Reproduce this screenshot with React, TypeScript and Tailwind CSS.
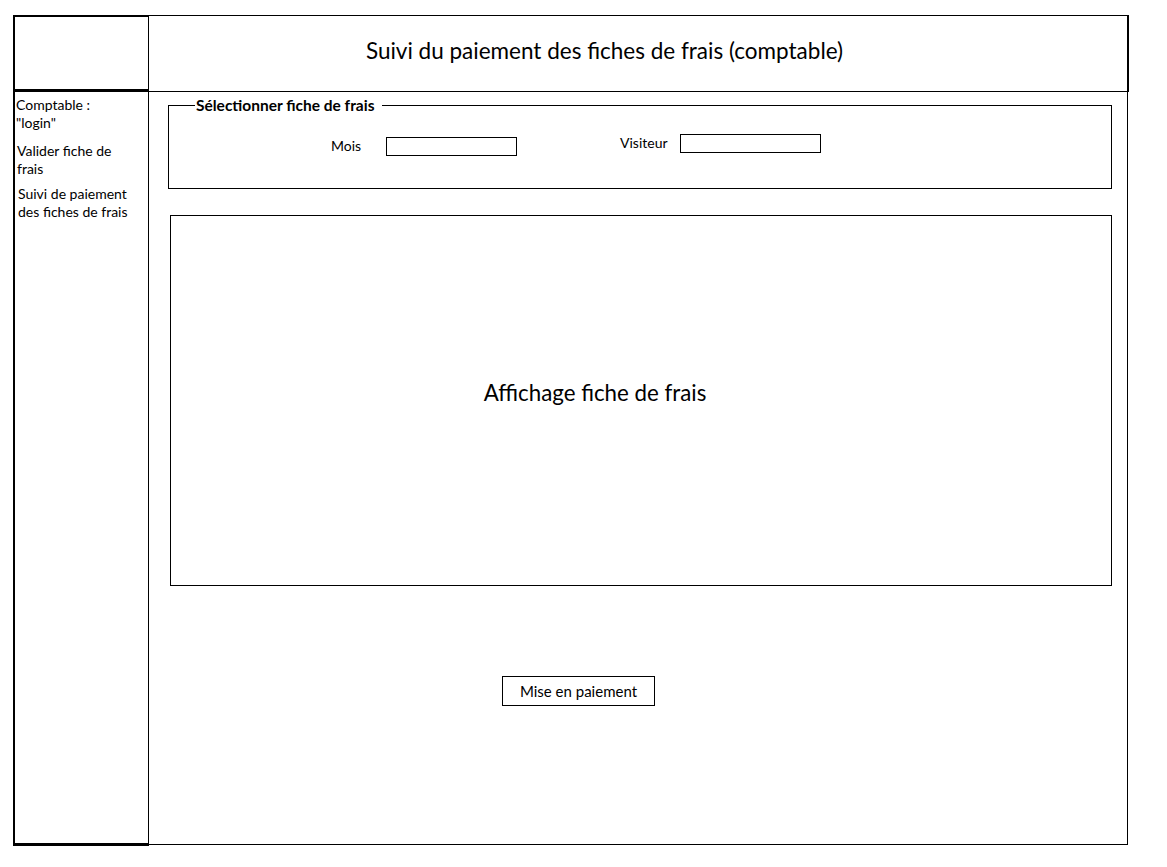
import React from 'react';

const font = { fontFamily: 'Lato, "Open Sans", sans-serif' };

function Sidebar() {
    return (
        <div className="w-[136px] h-[754px] shrink-0 border-l-2 border-r border-b-[3px] border-black pt-[4px] text-[14px] leading-[18px] text-black">
            <div className="pl-[1px]">
                <p>Comptable :</p>
                <p>"login"</p>
            </div>
            <div className="pl-[2px] mt-[10px]">
                <p>Valider fiche de</p>
                <p>frais</p>
            </div>
            <div className="pl-[3px] mt-[7px]">
                <p>Suivi de paiement</p>
                <p>des fiches de frais</p>
            </div>
        </div>
    );
}

function SelectFiche() {
    return (
        <fieldset className="ml-[20px] mr-[15px] mt-[4px] h-[93px] border border-black px-0 pt-[20px] pb-0">
            <legend className="ml-[26px] pl-[1px] pr-[8px] text-[15.5px] font-bold leading-[18px]">Sélectionner fiche de frais</legend>
            <div className="flex items-start">
                <div className="flex items-start ml-[162px] mt-[3px]">
                    <span className="w-[55px] text-[14px] leading-[18px]">Mois</span>
                    <input className="w-[131px] h-[19px] border border-black outline-none" />
                </div>
                <div className="flex items-start ml-[103px]">
                    <span className="w-[60px] text-[14px] leading-[18px]">Visiteur</span>
                    <input className="w-[141px] h-[19px] border border-black outline-none" />
                </div>
            </div>
        </fieldset>
    );
}

export default function App() {
    return (
        <div className="min-h-screen bg-white text-black" style={font}>
            <div className="ml-[13px] pt-[15px] w-[1116px]">
                {/* header row */}
                <div className="flex h-[77px]">
                    <div className="w-[136px] shrink-0 border-l-2 border-t-2 border-r border-b-[3px] border-black" />
                    <div className="flex-1 -ml-[1px] border-t border-r-2 border-b border-black flex items-center justify-center pr-[66px] pb-[6px]">
                        <h1 className="text-[22.5px] font-normal">Suivi du paiement des fiches de frais (comptable)</h1>
                    </div>
                </div>

                {/* body row */}
                <div className="flex h-[753px] items-start">
                    <Sidebar />
                    <main className="flex-1 h-[753px] -ml-[1px] mr-[1px] border-r border-b border-black flex flex-col">
                        <SelectFiche />
                        <div className="ml-[22px] mr-[15px] mt-[26px] h-[371px] border border-black flex items-center justify-center pr-[92px] pb-[16px]">
                            <span className="text-[22.3px]">Affichage fiche de frais</span>
                        </div>
                        <button className="ml-[354px] mt-[90px] w-[153px] h-[30px] border border-black text-[15px] leading-none bg-white">
                            Mise en paiement
                        </button>
                    </main>
                </div>
            </div>
        </div>
    );
}
